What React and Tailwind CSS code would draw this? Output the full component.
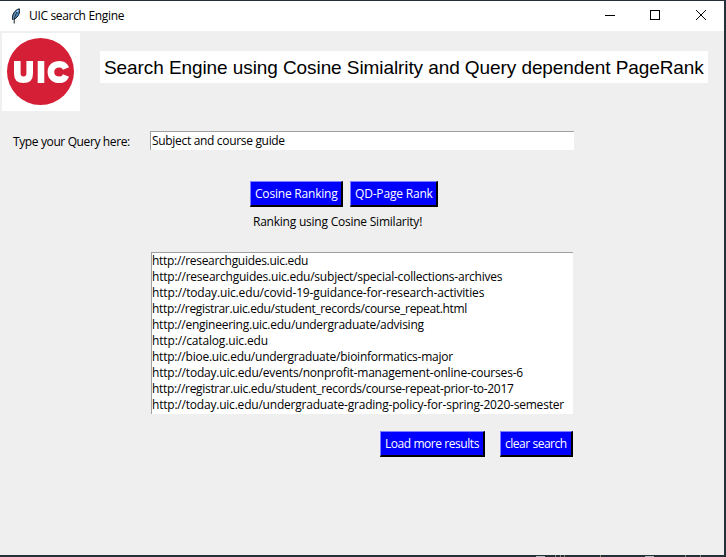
import React from "react";

const results = [
  ["http://researchguides.uic.edu", "tracking-[-0.29px]"],
  ["http://researchguides.uic.edu/subject/special-collections-archives", "tracking-[-0.22px]"],
  ["http://today.uic.edu/covid-19-guidance-for-research-activities", "tracking-[-0.15px]"],
  ["http://registrar.uic.edu/student_records/course_repeat.html", "tracking-[-0.34px]"],
  ["http://engineering.uic.edu/undergraduate/advising", "tracking-[-0.25px]"],
  ["http://catalog.uic.edu", "tracking-[-0.15px]"],
  ["http://bioe.uic.edu/undergraduate/bioinformatics-major", "tracking-[-0.24px]"],
  ["http://today.uic.edu/events/nonprofit-management-online-courses-6", "tracking-[-0.2px]"],
  ["http://registrar.uic.edu/student_records/course-repeat-prior-to-2017", "tracking-[-0.31px]"],
  ["http://today.uic.edu/undergraduate-grading-policy-for-spring-2020-semester", "tracking-[-0.21px]"],
];

function Button({ className, children }) {
  return (
    <button
      className={`flex h-[26px] items-center border-t border-l border-r-2 border-b-2 border-t-[#7f7fff] border-l-[#7f7fff] border-r-black border-b-black bg-[#0000ff] pt-px pl-1 text-left whitespace-nowrap text-white ${className}`}
    >
      {children}
    </button>
  );
}

function TitleBar() {
  return (
    <header className="flex h-[30px] items-center bg-white">
      <svg className="ml-[10px] h-4 w-3" viewBox="0 0 12 16">
        <path d="M2.500 11.500C1.800 7 4.500 2 9.300.8c.8 3.800-.5 7.800-5 10.500z" fill="#4684bd" stroke="#10161d" strokeWidth="1" />
        <path d="M8.300 2.200C5.500 5 4.500 8 4 12" stroke="#b9dcff" strokeWidth="1.100" fill="none" />
        <path d="M7 4C4.500 8 4 11 4.200 15.500" stroke="#151515" strokeWidth="1" fill="none" />
      </svg>
      <span className="ml-[7px] grow tracking-[-0.33px]">UIC search Engine</span>
      <svg className="h-[30px] w-[138px]" viewBox="0 0 138 30" fill="none" stroke="#000" shapeRendering="crispEdges">
        <path d="M19 14.500H29" />
        <path d="M64.500 9.500h9v9h-9z" />
        <path d="M110 9l10 10M120 9l-10 10" shapeRendering="auto" />
      </svg>
    </header>
  );
}

export default function App() {
  return (
    <div className="h-[557px] w-[726px] overflow-hidden bg-[#263039] pt-px font-['Open_Sans','Noto_Sans',sans-serif] text-[12px] leading-4 text-black">
      <div className="h-[554px] w-[724px] bg-[#efefef]">
        <TitleBar />
        <div className="flex pt-[2px] pl-[2px]">
          <div className="h-[78px] w-[78px] bg-white">
            <svg viewBox="0 0 78 78" className="h-full w-full">
              <circle cx="38.500" cy="38.500" r="33.500" fill="#d51f36" />
              <g fill="none" stroke="#fff" strokeWidth="6.600">
                <path d="M15.300 28v12.500c0 4.200 2 6.300 6.200 6.300s6.200-2.100 6.200-6.300V28" />
                <path d="M39 28v22" />
                <path d="M64 35.500c-1.300-3-3.300-4.300-6.300-4.300-5.500 0-8.800 2.800-8.800 7.800s3.300 7.800 8.800 7.800c3 0 5-1.300 6.300-4.300" />
              </g>
            </svg>
          </div>
          <h1 className="mt-[18px] ml-5 h-8 w-[608px] bg-white pt-px pl-1 font-['Liberation_Sans',Arial,sans-serif] text-[19px] leading-8 font-normal whitespace-nowrap tracking-[-0.083px]">
            Search Engine using Cosine Simialrity and Query dependent PageRank
          </h1>
        </div>
        <div className="mt-5 flex">
          <label className="mt-[3px] ml-[13px] w-[137px] whitespace-nowrap tracking-[-0.38px]">Type your Query here:</label>
          <div className="h-[19px] w-[424px] border-t border-l border-[#a0a0a0] bg-white pt-px pl-px tracking-[-0.32px]">Subject and course guide</div>
        </div>
        <div className="mt-[31px] ml-[250px] flex gap-[7px]">
          <Button className="w-[93px] tracking-[-0.2px]">Cosine Ranking</Button>
          <Button className="w-[88px] tracking-[-0.18px]">QD-Page Rank</Button>
        </div>
        <p className="mt-[7px] ml-[253px] tracking-[-0.23px]">Ranking using Cosine Similarity!</p>
        <ul className="mt-[22px] ml-[151px] h-[162px] w-[422px] border-t border-l border-[#a0a0a0] bg-white">
          {results.map(([url, spacing]) => (
            <li key={url} className="h-4 whitespace-nowrap">
              <span className={spacing}>{url}</span>
            </li>
          ))}
        </ul>
        <div className="mt-[17px] ml-[380px] flex gap-[15px]">
          <Button className="w-[105px] tracking-[-0.44px]">Load more results</Button>
          <Button className="w-[73px] tracking-[-0.47px]">clear search</Button>
        </div>
      </div>
      <svg className="block h-[2px] w-[726px]" viewBox="0 0 726 2" shapeRendering="crispEdges">
        <path d="M536 1h9M645 1h9" transform="translate(0 .5)" stroke="#b5b8ba" />
        <path d="M555 0h1v2h-1zM560 0h1v2h-1zM564 0h1v2h-1zM600 0h1v2h-1zM685 0h1v2h-1zM700 0h1v2h-1z" fill="#8c8378" />
      </svg>
    </div>
  );
}
